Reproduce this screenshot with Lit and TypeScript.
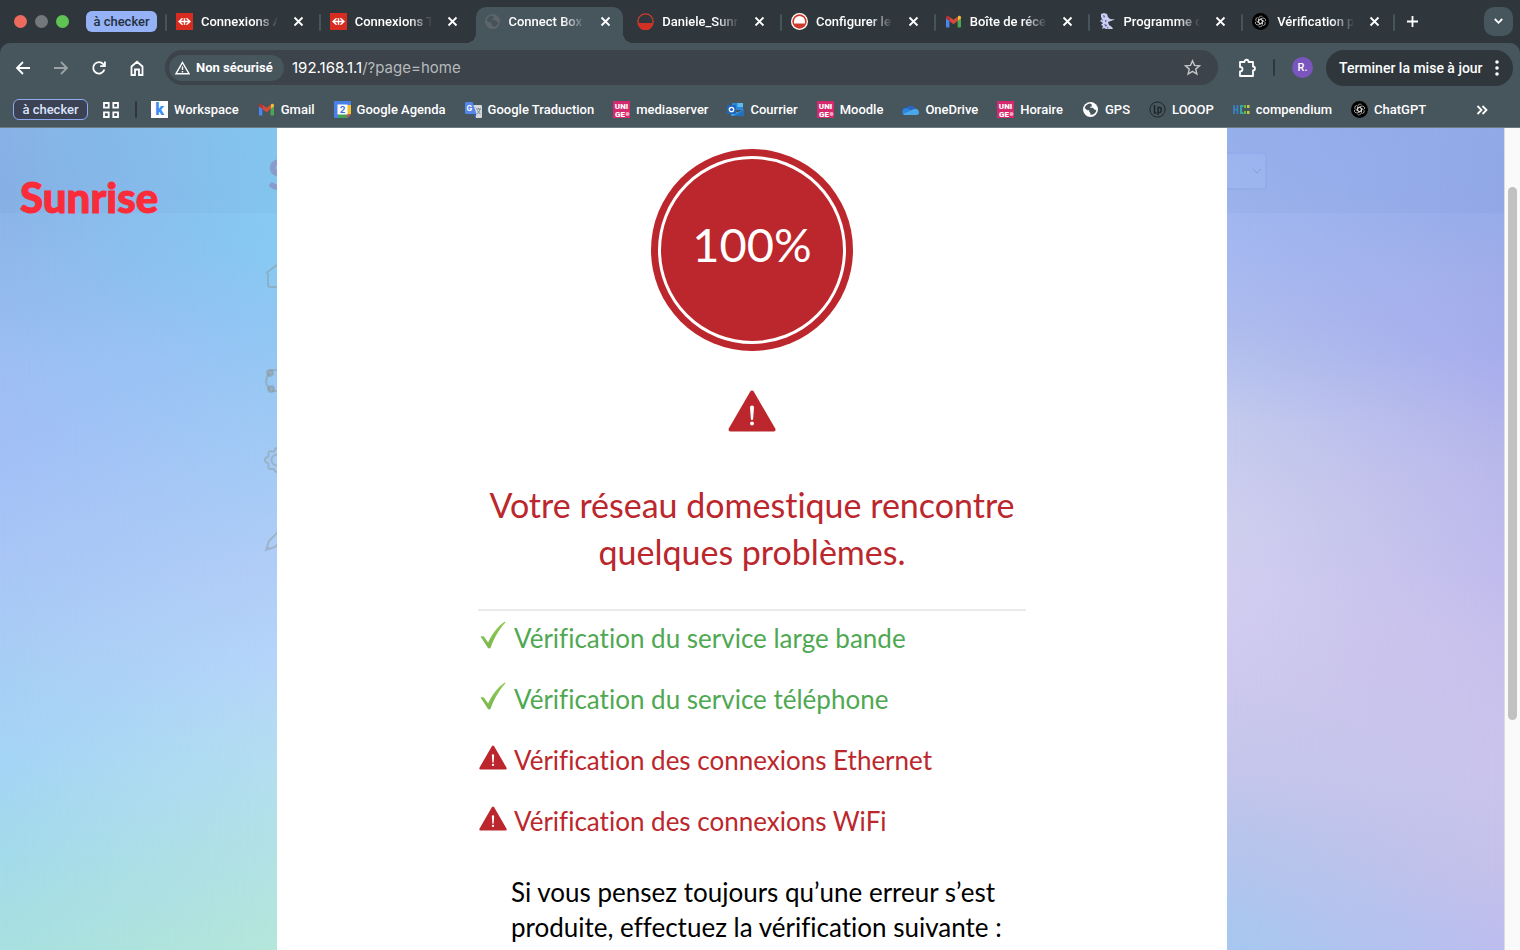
import { LitElement, html, css, svg } from "lit";
import { customElement } from "lit/decorators.js";

const unige = html`<svg class="ico" viewBox="0 0 17 17"><rect width="17" height="17" fill="#d8286d"/><text x="8.5" y="7.500" text-anchor="middle" font-family="Roboto" font-weight="900" font-size="8" fill="#fff">UNI</text><text x="7" y="15.800" text-anchor="middle" font-family="Roboto" font-weight="900" font-size="8" fill="#fff">GE</text><circle cx="14.5" cy="13" r="2" fill="#f3a9c6"/></svg>`;

const gmail = html`<svg class="ico" viewBox="0 0 17 17"><path d="M1 5v8.4c0 .6.4 1 1 1h2.400V7.500z" fill="#4a86f0"/><path d="M16 5v8.400c0 .6-.4 1-1 1h-2.400V7.500z" fill="#4da652"/><path d="M12.600 4v4.100L16 5.600V4.300c0-1.700-1.600-2-2.500-1.300z" fill="#f3bd2f"/><path d="M4.400 8V3.700l4.100 3.100 4.100-3.100V8l-4.100 3.200z" fill="#d9493a"/><path d="M1 4.300v1.300L4.400 8V3.700L3.500 3C2.500 2.300 1 2.800 1 4.300z" fill="#b9332c"/></svg>`;

const gpt = html`<svg class="ico" viewBox="0 0 17 17"><circle cx="8.500" cy="8.500" r="8.500" fill="#000"/><g fill="none" stroke="#d4d4d4" stroke-width="0.7">${[0, 60, 120, 180, 240, 300].map(
  (a) => svg`<path transform="rotate(${a} 8.5 8.5)" d="M6.700 9.500V5.300a2.200 2.200 0 0 1 3.900-1.300M6.700 7.200l1.800-1 3.200 1.800"/>`
)}</g></svg>`;

const globe = (disc: string, land: string) => html`<svg class="ico" viewBox="0 0 17 17"><circle cx="8.500" cy="8.500" r="7.500" fill="${disc}"/><path d="M8 2.600c-2.600.2-4.700 2-5.300 4.400l2.500 2.300h2v1.500l1.200 1.200v1.800c3 .3 5.600-1.800 6-4.600l-2.300-.9-1.200-1.600H8.300V5.400h1.500V3.600z" fill="${land}"/></svg>`;

const sbb = html`<svg class="ico" viewBox="0 0 17 17"><rect width="17" height="17" fill="#d82c20"/><path d="M2 8.500l3.500-3.300h2L5 7.700h2.800V5.200h1.400v2.500H12L9.500 5.200h2L15 8.500l-3.500 3.300h-2L12 9.300H9.200v2.500H7.800V9.300H5l2.500 2.500h-2z" fill="#fff"/></svg>`;

const icons: Record<string, unknown> = {
  unige,
  gmail,
  gpt,
  sbb,
  world: globe("#5d656b", "#465259"),
  gps: globe("#fff", "#47555d"),
  half: html`<svg class="ico" viewBox="0 0 17 17"><circle cx="8.500" cy="8.500" r="7.600" fill="#2f373d" stroke="#d13a2c" stroke-width="1.400"/><path d="M1 10h15a7.500 7.500 0 0 1-15 0z" fill="#cf3225"/></svg>`,
  dome: html`<svg class="ico" viewBox="0 0 17 17"><circle cx="8.500" cy="8.500" r="8.500" fill="#fff"/><circle cx="8.500" cy="8.500" r="7.200" fill="#cc3a2c"/><path d="M3 10.500v-2a5.500 5.500 0 0 1 11 0v2z" fill="#fff"/></svg>`,
  figure: html`<svg class="ico" viewBox="0 0 17 17"><path d="M2 1l3-1 3 1 1 3 2 2 5 .5-4 1.500-3 1 1 3 3 2 1 2H7l-2-1-2 1 1-3-2-1 2-2-3-2 2-2-1-2z" fill="#c9cdf0"/><path d="M4 2l2 1-1 2zM6 7l2 1-2 1zM5 11l3 1-1 2zM8 14l2 1-2 .500zM2.500 6l1.500 1-1 1z" fill="#4d4c8d"/></svg>`,
  kdrive: html`<svg class="ico" viewBox="0 0 17 17"><rect width="17" height="17" fill="#fff"/><text x="8.500" y="14" text-anchor="middle" font-family="Roboto" font-weight="900" font-size="16" fill="#3e8df0">k</text></svg>`,
  agenda: html`<svg class="ico" viewBox="0 0 17 17"><path d="M1 0h15a1 1 0 0 1 1 1v12.500L13.500 17H1a1 1 0 0 1-1-1V1a1 1 0 0 1 1-1z" fill="#4a80ea"/><path d="M13 4h4v9h-4z" fill="#f5c12f"/><path d="M4 13h9v4H4z" fill="#42a156"/><path d="M13 13h4l-4 4z" fill="#dc4a3c"/><path d="M3.500 3.500h10v10h-10z" fill="#fff"/><text x="8.500" y="12" text-anchor="middle" font-family="Inter" font-weight="700" font-size="9" fill="#3c6fd9">2</text></svg>`,
  trad: html`<svg class="ico" viewBox="0 0 17 17"><path d="M7 4h9a1 1 0 0 1 1 1v11a1 1 0 0 1-1 1h-5z" fill="#d6d8da"/><path d="M1 1h6.500l4 12H1a1 1 0 0 1-1-1V2a1 1 0 0 1 1-1z" fill="#5486ec"/><path d="M8 13h3.500L10 16.500z" fill="#3559b8"/><text x="1.500" y="9.500" font-family="Inter" font-weight="700" font-size="7.500" fill="#fff">G</text><path d="M11 8h5M13.500 7v1M15 8c-.5 2.500-2 4-3 5M12.500 9.500c.6 1.500 1.600 2.500 3 3.500" stroke="#74818a" fill="none" stroke-width="0.9"/></svg>`,
  outlook: html`<svg class="ico" viewBox="0 0 17 17"><path d="M5 2h11v7H5z" fill="#2e86d8"/><path d="M10.500 2H16v4h-5.500z" fill="#59bdf3"/><path d="M4 8.500l6.500 3 6.500-3V14a1 1 0 0 1-1 1H5a1 1 0 0 1-1-1z" fill="#3aa0e8"/><path d="M17 9v6H6z" fill="#236fc0"/><rect y="4" width="9" height="9" rx="1" fill="#1f66bd"/><circle cx="4.500" cy="8.500" r="2.200" fill="none" stroke="#fff" stroke-width="1.300"/></svg>`,
  onedrive: html`<svg class="ico" viewBox="0 0 17 17"><path d="M4.500 7A4.600 4.600 0 0 1 13 7.500l-5 4-6 1A3 3 0 0 1 4.500 7z" fill="#2866c0"/><path d="M2 8a4 4 0 0 1 4-.5l6 4-9 2.500C.5 14-1 10 2 8z" fill="#2f86d6"/><path d="M11 8.500c3-1.800 6 .3 6 3A2.500 2.500 0 0 1 14.500 14H3c-1 0-1.700-.5-2-1z" fill="#4aa7ea"/></svg>`,
  looop: html`<svg class="ico" viewBox="0 0 17 17"><circle cx="8.500" cy="8.500" r="7.600" fill="none" stroke="#1d2328" stroke-width="1"/><path d="M5.500 4v8h2M9 14V6.500h1.500a1.700 1.700 0 0 1 1.700 1.700v1.600a1.700 1.700 0 0 1-1.700 1.700H9" fill="none" stroke="#1d2328" stroke-width="1.400"/></svg>`,
  hc: html`<svg class="ico" viewBox="0 0 17 17"><path d="M1 4v9M4.500 4v9M1 8.500h4" stroke="#3b7fc0" stroke-width="1.800" fill="none"/><path d="M10.500 5H8v7h2.500" stroke="#35a6a0" stroke-width="2" fill="none"/><path d="M11 4h2v3h-2zM11 10h2v3h-2z" fill="#6fb83e"/><path d="M14 4h2.500v3H14zM14 10h2.500v3H14z" fill="#c5c93a"/></svg>`,
};

const tabs = [
  { icon: "sbb", label: "Connexions A", active: false, sep: true },
  { icon: "sbb", label: "Connexions T", active: false, sep: true },
  { icon: "world", label: "Connect Box", active: true, sep: false },
  { icon: "half", label: "Daniele_Sunr", active: false, sep: false },
  { icon: "dome", label: "Configurer le", active: false, sep: true },
  { icon: "gmail", label: "Boîte de réce", active: false, sep: true },
  { icon: "figure", label: "Programme c", active: false, sep: true },
  { icon: "gpt", label: "Vérification p", active: false, sep: true },
];

const bookmarks = [
  ["kdrive", "Workspace"],
  ["gmail", "Gmail"],
  ["agenda", "Google Agenda"],
  ["trad", "Google Traduction"],
  ["unige", "mediaserver"],
  ["outlook", "Courrier"],
  ["unige", "Moodle"],
  ["onedrive", "OneDrive"],
  ["unige", "Horaire"],
  ["gps", "GPS"],
  ["looop", "LOOOP"],
  ["hc", "compendium"],
  ["gpt", "ChatGPT"],
];

@customElement("browser-chrome")
class BrowserChrome extends LitElement {
  static styles = css`
    :host { display: block; background: #2f373d; color: #fff; font: 500 13px/16px Roboto, sans-serif; }
    button, input { font: inherit; color: inherit; background: none; border: 0; padding: 0; margin: 0; }
    svg { display: block; flex: none; }
    .ico { width: 17px; height: 17px; }
    .line { fill: none; stroke: currentColor; stroke-width: 1.8; }
    .strip { display: flex; align-items: stretch; height: 43px; }
    .lights { display: flex; align-items: center; gap: 8px; padding: 0 17px 0 14px; }
    .light { width: 13px; height: 13px; border-radius: 50%; }
    .close { background: #ed6a5e; }
    .min { background: #74787b; }
    .max { background: #5fc454; }
    .chip { align-self: center; min-width: 71px; height: 21px; padding: 0 6px; border-radius: 6px; background: #94b2f5; color: #24303e; white-space: nowrap; }
    .tabs { flex: 1; display: flex; min-width: 0; padding-left: 8px; }
    .tab { flex: 1 1 0; min-width: 0; display: flex; align-items: center; padding: 0 15px 0 9px; border-left: 2px solid transparent; position: relative; }
    .sep::before { content: ""; position: absolute; left: -2px; top: 14px; height: 17px; width: 2px; border-radius: 1px; background: #46545c; }
    .title { flex: 1; min-width: 0; margin: 0 10px 0 8px; overflow: hidden; white-space: nowrap; text-align: left; -webkit-mask-image: linear-gradient(90deg, #000 66%, transparent 94%); mask-image: linear-gradient(90deg, #000 66%, transparent 94%); }
    .active { z-index: 1; }
    .active::after { content: ""; position: absolute; z-index: -1; left: 1px; right: 3px; top: 7px; bottom: 0; border-radius: 10px 10px 0 0; background: #47555d; }
    .active .flare { position: absolute; z-index: -1; left: -9px; right: -7px; bottom: 0; height: 10px; background: radial-gradient(circle at 0 0, transparent 10px, #47555d 10px) left / 10px 10px no-repeat, radial-gradient(circle at 100% 0, transparent 10px, #47555d 10px) right / 10px 10px no-repeat; }
    .x { width: 11px; height: 11px; }
    .tail { box-sizing: border-box; display: flex; align-items: center; justify-content: space-between; width: 125px; padding: 0 7px 0 11px; position: relative; }
    .menu { display: grid; place-items: center; width: 29px; height: 29px; border-radius: 10px; background: #47555d; }
    .bar { display: flex; align-items: center; height: 49px; padding: 0 7px 0 15px; background: #47555d; border-radius: 10px 10px 0 0; box-sizing: border-box; }
    .nav { display: flex; gap: 22px; margin-right: 20px; }
    .nav svg { width: 16px; height: 16px; }
    .dim { opacity: .45; }
    .url { flex: 1; min-width: 0; display: flex; align-items: center; height: 35px; border-radius: 18px; background: #3c434a; padding: 0 17px 0 4px; font-size: 15px; }
    .secure { display: flex; align-items: center; gap: 6px; min-width: 115px; height: 26px; padding: 0 9px 0 6px; border-radius: 13px; background: #47555d; font-size: 13px; font-weight: 700; white-space: nowrap; }
    .address { flex: 1; min-width: 0; margin-left: 8px; font: 400 15px/20px Inter, sans-serif; }
    .path { color: #b6babd; }
    .ext { margin: 0 17px 0 20px; }
    .rule { width: 2px; height: 17px; background: #2f373d; border-radius: 1px; }
    .avatar { width: 21px; height: 21px; border-radius: 50%; background: #7a55bd; font-size: 11px; margin: 0 13px 0 17px; }
    .update { display: flex; align-items: center; justify-content: space-between; gap: 9px; min-width: 187px; height: 36px; padding: 0 14px 0 13px; border-radius: 18px; background: #2f373d; font-size: 14px; white-space: nowrap; }
    .marks { display: flex; align-items: center; height: 36px; padding: 0 32px 0 13px; background: #47555d; border-bottom: 1px solid #6f7a80; box-sizing: border-box; }
    .group { min-width: 75px; height: 21px; padding: 0 6px; border: 1px solid #8faaf0; border-radius: 6px; background: #3a4254; color: #dbe4fb; line-height: 17px; white-space: nowrap; }
    .grid { margin: 0 16px 0 15px; }
    .links { flex: 1; display: flex; gap: 19px; margin-left: 14px; min-width: 0; }
    .mark { display: flex; align-items: center; gap: 6px; color: #fff; text-decoration: none; white-space: nowrap; }
  `;
  render() {
    return html`
      <div class="strip">
        <div class="lights"><span class="light close"></span><span class="light min"></span><span class="light max"></span></div>
        <button class="chip">à checker</button>
        <div class="tabs">
          ${tabs.map(
            (t) => html`<div class="tab ${t.active ? "active" : ""} ${t.sep ? "sep" : ""}">
              ${t.active ? html`<span class="flare"></span>` : ""}${icons[t.icon]}
              <button class="title">${t.label}</button>
              <button aria-label="Fermer"><svg class="x line" viewBox="0 0 11 11"><path d="M1.500 1.500l8 8M9.500 1.500l-8 8"/></svg></button>
            </div>`
          )}
        </div>
        <div class="tail sep">
          <button aria-label="Nouvel onglet"><svg class="line" width="13" height="13" viewBox="0 0 13 13"><path d="M6.500 1v11M1 6.500h11"/></svg></button>
          <button class="menu" aria-label="Rechercher"><svg class="line" width="9" height="7" viewBox="0 0 9 7"><path d="M.8 1l3.700 3.800L8.200 1"/></svg></button>
        </div>
      </div>
      <div class="bar">
        <div class="nav">
          <button aria-label="Retour"><svg class="line" viewBox="0 0 16 16"><path d="M15 8H2M8 2L2 8l6 6"/></svg></button>
          <button class="dim" aria-label="Avancer"><svg class="line" viewBox="0 0 16 16"><path d="M1 8h13M8 2l6 6-6 6"/></svg></button>
          <button aria-label="Actualiser"><svg class="line" viewBox="0 0 16 16"><path d="M13.400 9.500A5.700 5.700 0 1 1 12.300 4.200L13.500 5.500M13.900 1.500v4.700H9.200"/></svg></button>
          <button aria-label="Accueil"><svg class="line" viewBox="0 0 16 16"><path d="M2.500 6.500L8 1.800l5.500 4.700V15H10V9.500H6V15H2.500z"/></svg></button>
        </div>
        <div class="url">
          <button class="secure"><svg width="15" height="14" viewBox="0 0 15 14"><path d="M7.500 1.500L14 12.700H1z" fill="none" stroke="#fff" stroke-width="1.400"/><path d="M7.500 5.500v3.500M7.500 10v1.400" stroke="#fff" stroke-width="1.400"/></svg>Non sécurisé</button>
          <div class="address">192.168.1.1<span class="path">/?page=home</span></div>
          <button aria-label="Favori"><svg width="17" height="17" viewBox="0 0 17 17"><path d="M8.500 1.800l2 4.600 5 .4-3.800 3.300 1.200 4.900-4.400-2.600L4.100 15l1.200-4.900L1.500 6.800l5-.4z" fill="none" stroke="#c3c6c8" stroke-width="1.400"/></svg></button>
        </div>
        <button class="ext" aria-label="Extensions"><svg class="line" width="18" height="20" viewBox="0 0 18 20"><path d="M2 4h4.500c0-3 4-3 4 0H15v4.500c2.600 0 2.600 4 0 4V18H2v-4.500c3.300 0 3.300-4.500 0-4.500z" stroke-linejoin="round"/></svg></button>
        <span class="rule"></span>
        <button class="avatar">R.</button>
        <button class="update">Terminer la mise à jour<svg width="4" height="16" viewBox="0 0 4 16" fill="#fff"><circle cx="2" cy="2" r="1.800"/><circle cx="2" cy="8" r="1.800"/><circle cx="2" cy="14" r="1.800"/></svg></button>
      </div>
      <div class="marks">
        <button class="group">à checker</button>
        <button class="grid" aria-label="Applications"><svg class="line" width="16" height="16" viewBox="0 0 16 16"><path d="M1 1h4.700v4.700H1zM10.300 1H15v4.700h-4.700zM1 10.300h4.700V15H1zM10.300 10.300H15V15h-4.700z"/></svg></button>
        <span class="rule"></span>
        <div class="links">${bookmarks.map(([i, l]) => html`<a class="mark" href="#">${icons[i]}${l}</a>`)}</div>
        <button aria-label="Autres favoris"><svg class="line" width="12" height="10" viewBox="0 0 12 10"><path d="M1.500 1l4 4-4 4M6.500 1l4 4-4 4"/></svg></button>
      </div>`;
  }
}

const warning = html`<svg class="warn" viewBox="0 0 48 42"><path d="M24 2.500L45.500 39.500h-43z" fill="#bb272d" stroke="#bb272d" stroke-width="4" stroke-linejoin="round"/><path d="M22 17.500a2 2 0 0 1 4 0l-.9 11.500a1.100 1.100 0 0 1-2.200 0z" fill="#fff"/><circle cx="24" cy="33.500" r="2" fill="#fff"/></svg>`;
const check = html`<svg class="check" viewBox="0 0 28 28"><defs><linearGradient id="g" x1="0" y1="0" x2="0" y2="1"><stop offset="0" stop-color="#8fca55"/><stop offset="1" stop-color="#7cb750"/></linearGradient></defs><path d="M1.500 15.500c1.400-.3 2.600-.3 3.600.3l4 5.600C13.500 12.500 18.500 5.500 25.800.6l.8.6C20.500 8 15.500 16 11.500 27c-.8.500-1.800.5-2.500 0z" fill="url(#g)"/></svg>`;

@customElement("connect-box")
class ConnectBox extends LitElement {
  static styles = css`
    :host { display: flex; position: relative; overflow: hidden; font-family: Lato, sans-serif; font-variant-ligatures: none; background: #fafafa; }
    svg { display: block; flex: none; }
    .page { flex: 1; min-width: 0; display: grid; }
    .page > * { grid-area: 1 / 1; }
    .content { z-index: 1; }
    .a { background: linear-gradient(#8cb6ea 0, #8ab4e8 8%, #94baee 20%, #9dbef4 28%, #a3c0f6 40%, #a8c6f6 52%, #a8cdf5 64%, #a4d5f6 77%, #a4dbea 89%, #a8e0e0 100%); }
    .b { background: linear-gradient(#86caf3 0, #86c9f2 15%, #90c6f2 24%, #a2caf5 40%, #b0cdf7 54%, #b4d4fa 64%, #b4ddf0 77%, #b2e2e4 89%, #b4e6da 100%); -webkit-mask-image: linear-gradient(90deg, transparent, #000 18.4%); mask-image: linear-gradient(90deg, transparent, #000 18.4%); }
    .c { background: linear-gradient(#9ab4f0 0, #a3b7f1 12%, #adbcee 24%, #c4cbee 36%, #cfcfee 48%, #d2cef0 56%, #cec9ee 67%, #c5c6ec 78%, #b8c5ec 86%, #a6c8f0 100%); -webkit-mask-image: linear-gradient(90deg, transparent 50%, #000 81.6%); mask-image: linear-gradient(90deg, transparent 50%, #000 81.6%); }
    .d { background: linear-gradient(#95adea 0, #96abe9 10%, #a0adea 18%, #a6acec 27%, #b8b8ea 41%, #c0bbec 54%, #c6bfec 61%, #cac4ec 78%, #c5c0ea 90%, #bcbdee 100%); -webkit-mask-image: linear-gradient(90deg, transparent 81.6%, #000); mask-image: linear-gradient(90deg, transparent 81.6%, #000); }
    .top { display: grid; grid-template-columns: 248px 1fr 237px; align-items: start; height: 85px; background: rgba(90,120,180,.06); }
    .brand { margin: 0; padding: 45px 0 0 20px; font: 900 42px/48px Lato, sans-serif; color: #fb2c3a; -webkit-text-stroke: 1px #fb2c3a; }
    .ghost { grid-column: 2; grid-row: 1; margin: 0; padding: 22px 0 0 20px; font: 900 42px/48px Lato, sans-serif; color: #889dce; }
    .lang { grid-column: 2; grid-row: 1; justify-self: end; margin: 24px 0 0; width: 120px; height: 38px; border: 2px solid rgba(120,140,220,.22); border-radius: 3px; background: rgba(165,190,245,.35); appearance: none; }
    .chev { grid-column: 2; grid-row: 1; justify-self: end; margin: 40px 5px 0 0; z-index: 1; }
    .side { display: flex; flex-direction: column; gap: 53px; padding: 50px 0 0 264px; color: rgba(140,150,150,.45); }
    .side svg { width: 26px; height: 26px; fill: none; stroke: currentColor; stroke-width: 2; }
    .side .home { margin-bottom: 26px; }
    .scroll { width: 16px; box-sizing: border-box; border-left: 1px solid #dcdcdc; padding: 59px 3px 0; }
    .thumb { height: 533px; border-radius: 5px; background: #c1c1c1; }
    .veil { position: absolute; z-index: 2; inset: 0 16px 0 0; display: flex; justify-content: center; align-items: stretch; }
    .modal { width: 950px; background: #fff; display: flex; flex-direction: column; align-items: center; color: #bb272d; }
    .dial { box-sizing: border-box; width: 202px; height: 202px; margin-top: 21px; padding: 7px; border-radius: 50%; background: #bb272d; }
    .ring { box-sizing: border-box; height: 100%; border: 3px solid #fff; border-radius: 50%; display: grid; place-items: center; padding-bottom: 12px; color: #fff; font-size: 47px; line-height: 56px; }
    .big { margin-top: 39px; }
    .big .warn { width: 48px; height: 42px; }
    h1 { margin: 49px 0 0; max-width: 548px; text-align: center; font-size: 34px; line-height: 47px; font-weight: 400; }
    .list { box-sizing: border-box; width: 548px; margin: 34px 0 0; padding: 0; border-top: 2px solid #ebebeb; list-style: none; font-size: 26px; }
    .row { display: flex; gap: 8px; height: 61px; line-height: 55px; }
    .ok { color: #4fa852; }
    .glyph { width: 28px; padding: 10px 0 0 1px; box-sizing: border-box; }
    .check { width: 28px; height: 28px; }
    .glyph .warn { width: 28px; height: 25px; margin-top: 2px; }
    .note { margin: 20px 0 0; width: 482px; color: #000; font-size: 26px; line-height: 35px; white-space: nowrap; }
  `;
  render() {
    const rows = [
      [true, "Vérification du service large bande"],
      [true, "Vérification du service téléphone"],
      [false, "Vérification des connexions Ethernet"],
      [false, "Vérification des connexions WiFi"],
    ];
    return html`
      <div class="page">
        <div class="a"></div><div class="b"></div><div class="c"></div><div class="d"></div>
        <div class="content">
          <div class="top">
            <p class="brand">Sunrise</p>
            <p class="ghost">S</p>
            <select class="lang" aria-label="Langue"></select>
            <svg class="chev" width="10" height="7" viewBox="0 0 10 7"><path d="M1 1l4 4 4-4" fill="none" stroke="#8598dc"/></svg>
          </div>
          <div class="side">
            <svg class="home" viewBox="0 0 26 26"><path d="M2 10L13 2l11 8M4 10v12q0 2 2 2h14q2 0 2-2V10"/></svg>
            <svg viewBox="0 0 26 26"><path d="M6 5C1 10 1 16 6 22M6 2h14M8 23h12"/><circle cx="6" cy="5" r="3" fill="currentColor"/><circle cx="7" cy="21" r="3" fill="currentColor"/></svg>
            <svg viewBox="0 0 26 26"><circle cx="13" cy="13" r="5.500"/><path d="M13 1c-2 0-2 1-2.500 3-1 .8-1.500.8-2.500.6-2-1.600-4 1-3.400 2.800.4 1 0 1.800-.8 2.600C1 10.500.8 12 1 13.500c0 2 1.500 2 3 2.500.6 1 .8 1.800.4 2.800-1 2 1 3.700 3 3.200 1.200-.5 2 0 3 .6.4 2 1 2.400 2.600 2.400"/></svg>
            <svg viewBox="0 0 26 26"><path d="M2 24l3-9L18 2l6 6-13 13zM3 21l2 2"/></svg>
          </div>
        </div>
      </div>
      <div class="scroll"><div class="thumb"></div></div>
      <div class="veil">
        <section class="modal" role="dialog" aria-label="Diagnostic">
          <div class="dial"><div class="ring">100%</div></div>
          <div class="big">${warning}</div>
          <h1>Votre réseau domestique rencontre quelques problèmes.</h1>
          <ul class="list">${rows.map(([ok, t]) => html`<li class="row ${ok ? "ok" : ""}"><span class="glyph">${ok ? check : warning}</span><span>${t}</span></li>`)}</ul>
          <p class="note">Si vous pensez toujours qu’une erreur s’est<br>produite, effectuez la vérification suivante :</p>
        </section>
      </div>`;
  }
}

@customElement("app-root")
class AppRoot extends LitElement {
  static styles = css`
    :host { display: flex; flex-direction: column; height: 100vh; overflow: hidden; }
    .view { flex: 1; min-height: 0; }
  `;
  render() {
    return html`<browser-chrome></browser-chrome><connect-box class="view"></connect-box>`;
  }
}
